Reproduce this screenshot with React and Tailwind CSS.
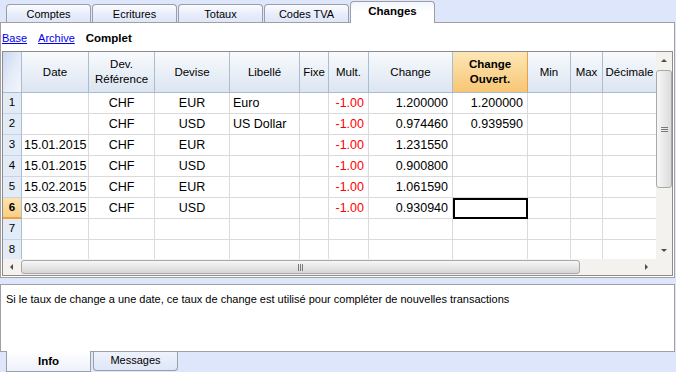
import React from "react";

const topTabs = ["Comptes", "Ecritures", "Totaux", "Codes TVA", "Changes"];

const cols = [
  { w: "w-[67px]", label: ["Date"], align: "justify-start pl-[2px]" },
  { w: "w-[66px]", label: ["Dev.", "Référence"], align: "justify-center" },
  { w: "w-[75px]", label: ["Devise"], align: "justify-center" },
  { w: "w-[70px]", label: ["Libellé"], align: "justify-start pl-[3px]" },
  { w: "w-[29px]", label: ["Fixe"], align: "justify-center" },
  { w: "w-[40px]", label: ["Mult."], align: "justify-end pr-[4px] text-[#ff0000]" },
  { w: "w-[84px]", label: ["Change"], align: "justify-end pr-[4px]" },
  { w: "w-[75px]", label: ["Change", "Ouvert."], align: "justify-end pr-[4px]", hot: true },
  { w: "w-[43px]", label: ["Min"], align: "justify-center" },
  { w: "w-[32px]", label: ["Max"], align: "justify-center" },
  { w: "w-[53px]", label: ["Décimale"], align: "justify-center", last: true },
];

const rows = [
  ["", "CHF", "EUR", "Euro", "", "-1.00", "1.200000", "1.200000", "", "", ""],
  ["", "CHF", "USD", "US Dollar", "", "-1.00", "0.974460", "0.939590", "", "", ""],
  ["15.01.2015", "CHF", "EUR", "", "", "-1.00", "1.231550", "", "", "", ""],
  ["15.01.2015", "CHF", "USD", "", "", "-1.00", "0.900800", "", "", "", ""],
  ["15.02.2015", "CHF", "EUR", "", "", "-1.00", "1.061590", "", "", "", ""],
  ["03.03.2015", "CHF", "USD", "", "", "-1.00", "0.930940", "", "", "", ""],
  ["", "", "", "", "", "", "", "", "", "", ""],
  ["", "", "", "", "", "", "", "", "", "", ""],
];

function TopTab({ label, active }) {
  if (active) {
    return (
      <div className="relative z-10 flex h-[22px] w-[85px] translate-y-[1px] items-center justify-center rounded-t-[4px] border border-b-0 border-[#9a9ea6] bg-gradient-to-b from-[#f4f6fd] via-white to-white pb-[2px] text-[11.5px] font-bold text-black">
        {label}
      </div>
    );
  }
  return (
    <div className="flex h-[18px] w-[85px] items-center justify-center rounded-t-[4px] border border-b-0 border-[#9a9ea6] bg-gradient-to-b from-[#fbfcff] via-[#e9eefb] to-[#dfe6f8] pt-[1px] text-[11px] text-black">
      {label}
    </div>
  );
}

function Header() {
  return (
    <div className="flex h-[41px] border-b border-[#a9bdd2]">
      <div className="w-[19px] shrink-0 border-r border-[#a9bdd2] bg-gradient-to-br from-[#c9d7f0] via-[#e4ebf8] to-[#f3f6fc]" />
      {cols.map((c, i) =>
        c.hot ? (
          <div
            key={i}
            className={`${c.w} flex shrink-0 flex-col items-center justify-center border-r border-[#f0a040] bg-gradient-to-b from-[#fde7b6] to-[#f7c673] text-[11.5px] font-bold leading-[15px]`}
          >
            {c.label.map((l) => (
              <span key={l}>{l}</span>
            ))}
          </div>
        ) : (
          <div
            key={i}
            className={`${c.w} flex shrink-0 flex-col items-center justify-center overflow-hidden whitespace-nowrap bg-gradient-to-b from-[#f8fafd] to-[#dce5f1] text-[11.5px] leading-[15px] ${c.last ? "" : "border-r border-[#a9bdd2]"}`}
          >
            {c.label.map((l) => (
              <span key={l}>{l}</span>
            ))}
          </div>
        )
      )}
    </div>
  );
}

function Row({ n, cells, short }) {
  const sel = n === 6;
  return (
    <div className={`flex ${short ? "h-[19px]" : "h-[21px]"}`}>
      <div
        className={`flex w-[19px] shrink-0 items-center justify-center border-r border-[#a9bdd2] text-[11.5px] ${
          sel
            ? "border-b-2 border-b-[#f0a040] bg-gradient-to-b from-[#fde3ad] to-[#f9cf86] font-bold"
            : short
            ? "bg-[#e3ebf7]"
            : "border-b border-b-[#c5d3e6] bg-[#e3ebf7]"
        }`}
      >
        {n}
      </div>
      {cells.map((v, i) => {
        const c = cols[i];
        const focus = sel && i === 7;
        return (
          <div
            key={i}
            className={`${c.w} flex shrink-0 items-center overflow-hidden whitespace-nowrap text-[12.5px] ${c.align} ${
              c.last ? "" : "border-r border-[#dadada]"
            } ${short ? "" : "border-b border-b-[#dadada]"} ${focus ? "outline-2 -outline-offset-2 outline-black" : ""}`}
          >
            {v}
          </div>
        );
      })}
    </div>
  );
}

function Arrow({ dir }) {
  const pts = {
    up: "1,5 4,2 7,5",
    down: "1,2 4,5 7,2",
    left: "5,1 2,4 5,7",
    right: "2,1 5,4 2,7",
  }[dir];
  return (
    <svg width="8" height="8" viewBox="0 0 8 8">
      <polygon points={pts} fill="#4d4d4d" />
    </svg>
  );
}

function VScroll() {
  return (
    <div className="flex w-[16px] shrink-0 flex-col bg-[#f3f2ef]">
      <div className="flex h-[17px] items-center justify-center">
        <Arrow dir="up" />
      </div>
      <div className="mt-[1px] flex h-[118px] items-center justify-center rounded-[3px] border border-[#a8a8a8] bg-gradient-to-r from-[#f7f7f7] to-[#dcdcdc]">
        <div className="flex flex-col gap-[1px]">
          <div className="h-px w-[7px] bg-[#7a7a7a]" />
          <div className="h-px w-[7px] bg-[#7a7a7a]" />
          <div className="h-px w-[7px] bg-[#7a7a7a]" />
        </div>
      </div>
      <div className="flex-1" />
      <div className="flex h-[16px] items-center justify-center">
        <Arrow dir="down" />
      </div>
    </div>
  );
}

function HScroll() {
  return (
    <div className="flex h-[16px]">
      <div className="flex w-[653px] items-center bg-[#f3f2ef]">
        <div className="flex w-[18px] justify-center">
          <Arrow dir="left" />
        </div>
        <div className="flex h-[14px] w-[559px] items-center justify-center rounded-[3px] border border-[#a8a8a8] bg-gradient-to-b from-[#f7f7f7] to-[#d6d6d6]">
          <div className="flex gap-[1px]">
            <div className="h-[7px] w-px bg-[#7a7a7a]" />
            <div className="h-[7px] w-px bg-[#7a7a7a]" />
            <div className="h-[7px] w-px bg-[#7a7a7a]" />
          </div>
        </div>
        <div className="flex-1" />
        <div className="flex w-[18px] justify-center">
          <Arrow dir="right" />
        </div>
      </div>
      <div className="w-[16px] bg-[#f3f2ef]" />
    </div>
  );
}

export default function App() {
  return (
    <div className="flex h-[372px] w-[676px] flex-col overflow-hidden bg-[#dee6fb] font-['Liberation_Sans',Arial,sans-serif] text-black">
      <div className="flex h-[22px] items-end gap-[1px] pl-[6px]">
        {topTabs.map((t) => (
          <TopTab key={t} label={t} active={t === "Changes"} />
        ))}
      </div>

      <div className="flex h-[256px] w-[675px] flex-col border border-[#a0a0a0] bg-white">
        <div className="flex h-[28px] items-center gap-[11px] pl-[1px] pt-[3px] text-[11px]">
          <span className="text-[#0000ee] underline">Base</span>
          <span className="text-[#0000ee] underline">Archive</span>
          <span className="text-[11.5px] font-bold">Complet</span>
        </div>
        <div className="ml-[1px] w-[671px] border border-[#8c8c8c]">
          <div className="flex">
            <div className="flex w-[653px] flex-col">
              <Header />
              {rows.map((r, i) => (
                <Row key={i} n={i + 1} cells={r} short={i === 7} />
              ))}
            </div>
            <VScroll />
          </div>
          <HScroll />
        </div>
      </div>

      <div className="mt-[6px] flex h-[68px] w-[675px] border border-[#a0a0a0] bg-white px-[5px] pt-[6px] text-[11px]">
        Si le taux de change a une date, ce taux de change est utilisé pour compléter de nouvelles transactions
      </div>

      <div className="flex gap-[2px] pl-[6px]">
        <div className="-mt-px flex h-[21px] w-[85px] items-center justify-center border border-t-0 border-[#9a9ea6] bg-gradient-to-b from-white to-[#eef1fb] pt-[2px] text-[11.5px] font-bold">
          Info
        </div>
        <div className="flex h-[19px] w-[85px] items-center justify-center rounded-b-[4px] border border-t-0 border-[#9a9ea6] bg-gradient-to-b from-[#eef2fc] to-[#dfe6f8] pb-[2px] text-[11px]">
          Messages
        </div>
      </div>
    </div>
  );
}
